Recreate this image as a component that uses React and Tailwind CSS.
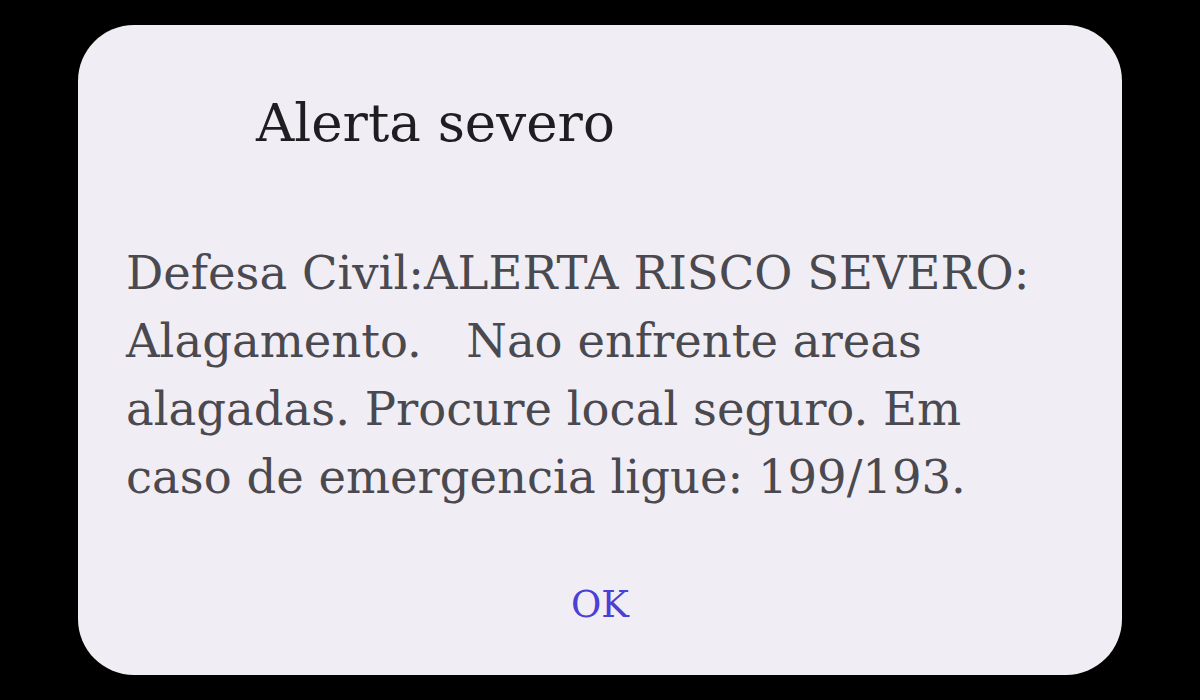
import React from 'react';

const App = () => {
  return (
    <div className="w-[1200px] h-[700px] bg-black flex items-center justify-center" style={{ fontFamily: '"DejaVu Serif", "Liberation Serif", serif' }}>
      <div className="w-[1044px] h-[650px] bg-[#f0eef4] rounded-[56px] flex flex-col">
        <h1 className="pl-[178px] pt-[66px] text-[53px] leading-[64px] text-[#1e1d22]">Alerta severo</h1>
        <p className="pl-[48px] pt-[84px] text-[46.5px] leading-[68px] text-[#4a494f] whitespace-pre">
          {'Defesa Civil:ALERTA RISCO SEVERO:\nAlagamento.   Nao enfrente areas\nalagadas. Procure local seguro. Em\ncaso de emergencia ligue: 199/193.'}
        </p>
        <div className="flex justify-center mt-auto mb-[48px]">
          <button className="text-[37px] leading-[44px] text-[#4b3fd4]">OK</button>
        </div>
      </div>
    </div>
  );
};

export default App;
